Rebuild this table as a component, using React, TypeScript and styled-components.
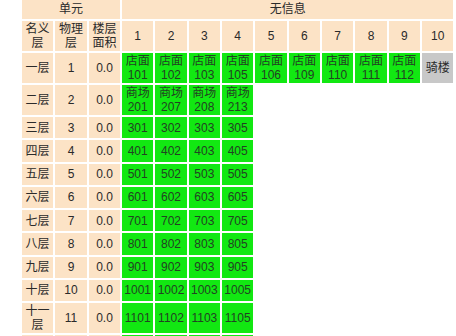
import React from 'react';
import styled, { createGlobalStyle } from 'styled-components';

const GlobalStyle = createGlobalStyle`
  html, body {
    margin: 0;
    padding: 0;
    background: #fff;
  }
  body {
    width: 456px;
    height: 336px;
    overflow: hidden;
  }
`;

const Grid = styled.table`
  margin: -4px 0 0 20px;
  border-collapse: separate;
  border-spacing: 2px;
  table-layout: fixed;
  width: 435.3px;
  font-family: "Liberation Sans", "Noto Sans CJK SC", sans-serif;
  font-size: 12px;
  line-height: 14px;
  color: #2a2a2a;
`;

const Row = styled.tr<{ $tall?: boolean }>`
  height: ${(p) => (p.$tall ? '30px' : '21.25px')};
`;

const HeadRow = styled.tr`
  height: 21px;
`;

const Head = styled.td`
  background: #fce3c6;
  padding: 1px;
  text-align: center;
  vertical-align: middle;
`;

type Kind = 'green' | 'gray' | 'empty';

const Unit = styled.td<{ $kind: Kind }>`
  padding: 1px 0;
  text-align: center;
  vertical-align: middle;
  background: ${(p) =>
    p.$kind === 'green' ? '#12e812' : p.$kind === 'gray' ? '#c8c8c8' : 'transparent'};
  color: ${(p) => (p.$kind === 'green' ? '#224222' : '#2a2a2a')};
  white-space: nowrap;
`;

type Cell = { label?: string; no?: string; kind: Kind };

type Floor = { name: string; level: number; tall?: boolean; units: Cell[] };

const blanks = (n: number): Cell[] => Array.from({ length: n }, () => ({ kind: 'empty' as Kind }));

const plain = (level: number): Cell[] => [
  ...['01', '02', '03', '05'].map((s) => ({ no: `${level}${s}`, kind: 'green' as Kind })),
  ...blanks(6),
];

const floors: Floor[] = [
  {
    name: '一层',
    level: 1,
    tall: true,
    units: [
      ...['101', '102', '103', '105', '106', '109', '110', '111', '112'].map((no) => ({
        label: '店面',
        no,
        kind: 'green' as Kind,
      })),
      { label: '骑楼', kind: 'gray' },
    ],
  },
  {
    name: '二层',
    level: 2,
    tall: true,
    units: [
      ...['201', '207', '208', '213'].map((no) => ({ label: '商场', no, kind: 'green' as Kind })),
      ...blanks(6),
    ],
  },
  { name: '三层', level: 3, units: plain(3) },
  { name: '四层', level: 4, units: plain(4) },
  { name: '五层', level: 5, units: plain(5) },
  { name: '六层', level: 6, units: plain(6) },
  { name: '七层', level: 7, units: plain(7) },
  { name: '八层', level: 8, units: plain(8) },
  { name: '九层', level: 9, units: plain(9) },
  { name: '十层', level: 10, units: plain(10) },
  { name: '十一层', level: 11, tall: true, units: plain(11) },
  { name: '十二层', level: 12, tall: true, units: plain(12) },
];

const App: React.FC = () => {
  return (
    <>
      <GlobalStyle />
      <Grid>
        <colgroup>
          <col style={{ width: 31 }} />
          <col style={{ width: 32 }} />
          <col style={{ width: 31 }} />
          {Array.from({ length: 10 }, (_, i) => (
            <col key={i} style={{ width: 31.33 }} />
          ))}
        </colgroup>
        <tbody>
          <HeadRow>
            <Head colSpan={3}>单元</Head>
            <Head colSpan={10}>无信息</Head>
          </HeadRow>
          <Row $tall>
            <Head>名义层</Head>
            <Head>物理层</Head>
            <Head>楼层面积</Head>
            {Array.from({ length: 10 }, (_, i) => (
              <Head key={i}>{i + 1}</Head>
            ))}
          </Row>
          {floors.map((f) => (
            <Row key={f.level} $tall={f.tall}>
              <Head>{f.name}</Head>
              <Head>{f.level}</Head>
              <Head>0.0</Head>
              {f.units.map((u, i) => (
                <Unit key={i} $kind={u.kind}>
                  {u.label}
                  {u.label && u.no && <br />}
                  {u.no}
                </Unit>
              ))}
            </Row>
          ))}
        </tbody>
      </Grid>
    </>
  );
};

export default App;
